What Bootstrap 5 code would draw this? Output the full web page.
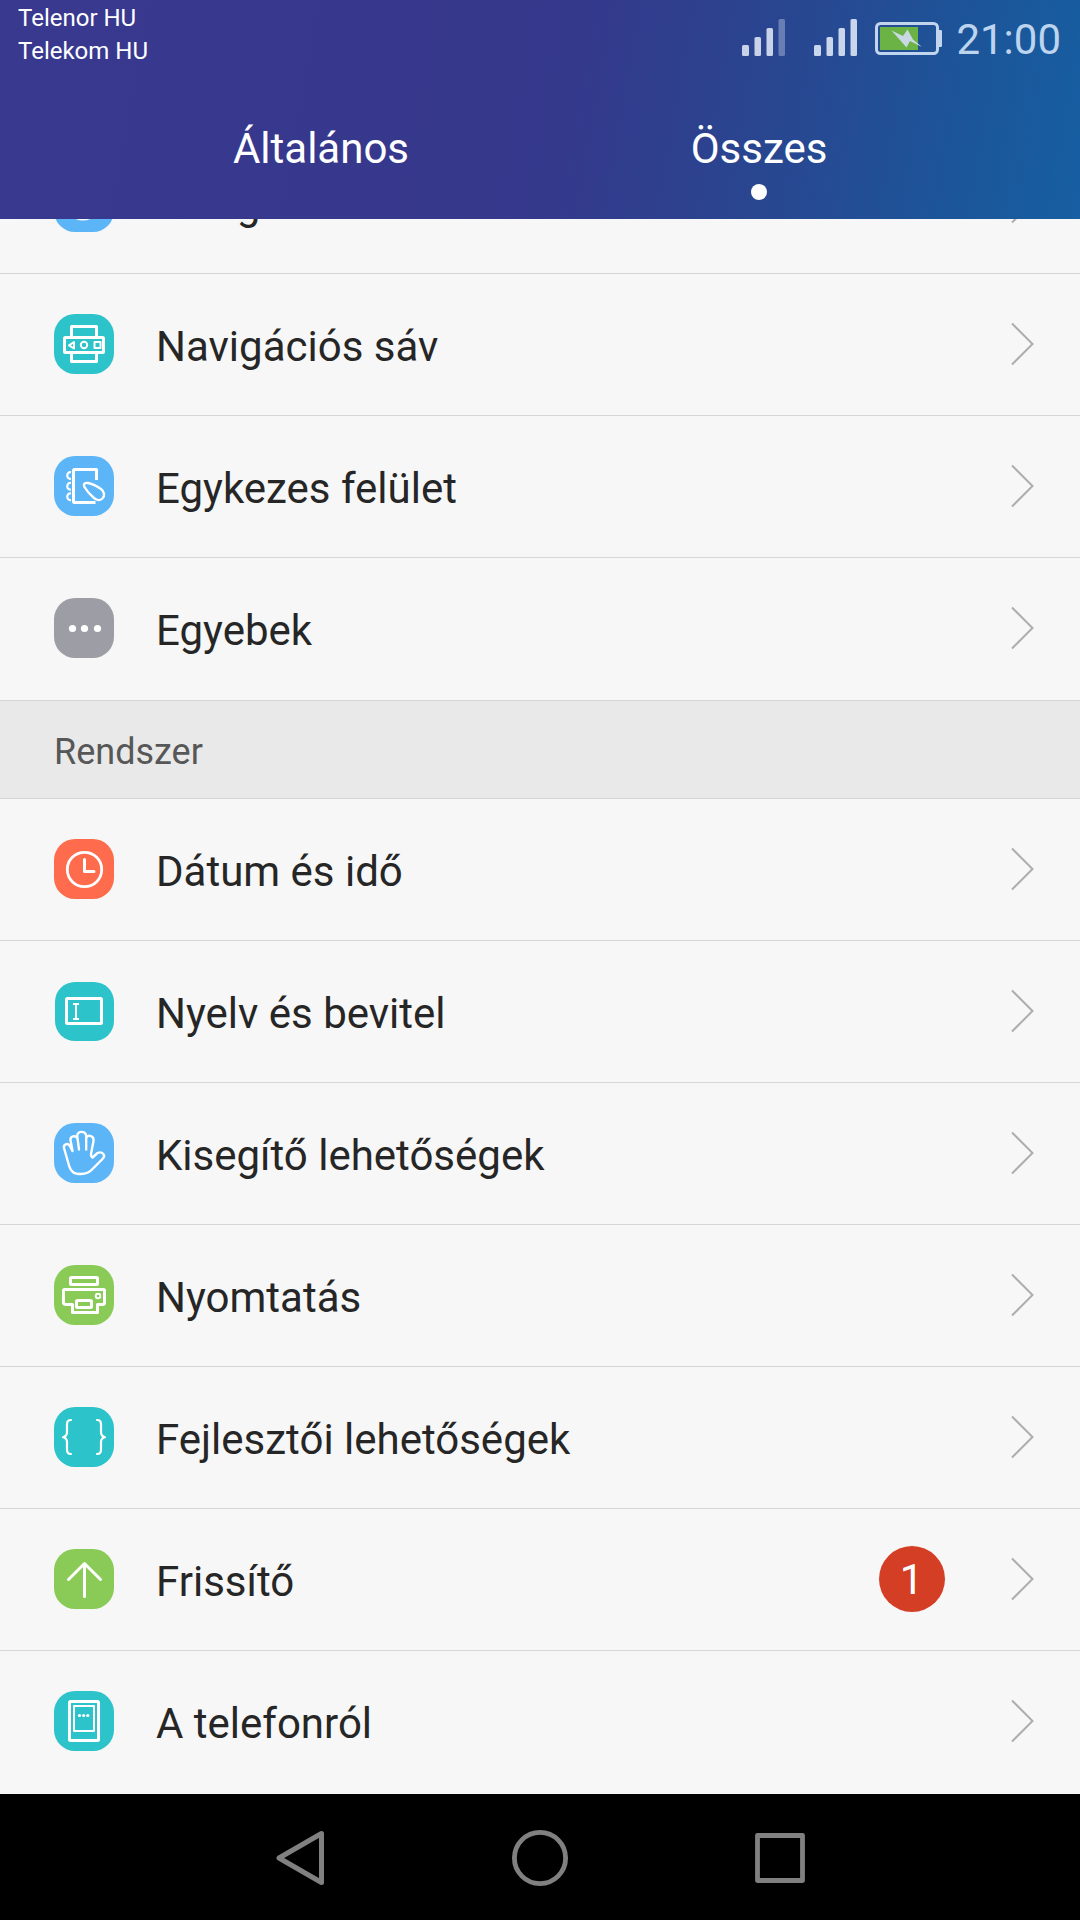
<!DOCTYPE html>
<html lang="hu">
<head>
<meta charset="utf-8">
<title>Beállítások</title>
<meta name="viewport" content="width=device-width, initial-scale=1">
<link href="https://cdn.jsdelivr.net/npm/bootstrap@5.3.0/dist/css/bootstrap.min.css" rel="stylesheet">
<style>
body{font-family:Roboto,"Noto Sans",sans-serif;background:#f7f7f7;color:#262626;height:1920px;overflow:hidden}
svg{display:block;flex:none}
.top-bar{height:219px;flex:none;color:#fff;z-index:2;background:linear-gradient(100deg,#38398f 0%,#36388c 47%,#34398c 53%,#284791 72%,#1c5599 88%,#165fa2 100%)}
.status{height:78px;padding:0 19px 0 18px}
.carriers{font-size:24px;line-height:33px;padding-top:2px}
.signal-a{margin-right:29px}.signal-b{margin-right:18px}
.icons-row{padding-top:19px;height:78px}
.clock{font-size:42px;line-height:42px;color:#bcd4ee;margin-left:13px}
.tabs-row{padding:0 102px}
.tab-btn{font-size:42px;line-height:50px;padding-top:46px;color:#fff;width:438px}
.tab-dot{width:16px;height:16px;margin-top:10px}
.settings{height:1575px;flex:none}
.settings .set-row{height:142px;border:0;border-bottom:1px solid #d6d6d6;border-radius:0;background:#f7f7f7;padding:0 45px 1px 54px;color:#262626;flex:none}
.settings .set-last{height:143px;padding-bottom:2px}
.settings .set-last:last-child{padding-bottom:3px}
.row-cut{margin-top:-87px}
.label-text{font-size:42px;line-height:50px;padding:5px 0 0;margin-left:42px}
.row-cut .label-text{padding-top:6px;transform:translateY(.1px)}
.count{width:66px;height:66px;font-size:42px;line-height:67px;font-weight:400;background:#d43e25;padding:0 1px 0 0;margin-right:66px}
.group-head{height:98px;background:#e9e9e9;border-bottom:1px solid #d6d6d6;font-size:36px;color:#575757;padding:4px 54px 0;flex:none}
.nav-keys{height:126px;background:#000;gap:186px;padding:2px 1px 0 0}
.ico{width:60px;height:60px;fill:none;stroke:#fff;stroke-width:3;stroke-linecap:round;stroke-linejoin:round}
.tile{stroke:none}.teal{fill:#2dc3ca}.blue{fill:#5bb5f6}.gray{fill:#9d9ea5}.coral{fill:#ff6b4d}.green{fill:#8acb57}
.solid{fill:#fff;stroke:none}
.chev{fill:none;stroke:#adadad;stroke-width:2}
</style>
<script src="https://cdn.jsdelivr.net/npm/bootstrap@5.3.0/dist/js/bootstrap.bundle.min.js"></script>
</head>
<body class="d-flex flex-column">
<svg width="0" height="0" class="position-absolute"><defs><symbol id="chev" viewBox="0 0 24 44"><path d="M1 1.500 21.500 22 1 42.500"/></symbol></defs></svg>

<header class="top-bar position-relative">
  <div class="status d-flex justify-content-between">
    <div class="carriers"><div>Telenor HU</div><div>Telekom HU</div></div>
    <div class="icons-row d-flex align-items-start">
      <svg class="signal-a" width="43" height="37" fill="#c9d2e9"><rect y="26" width="7" height="11" rx="1.5"/><rect x="12.500" y="18" width="6.500" height="19" rx="1.500"/><rect x="24.500" y="9" width="6.500" height="28" rx="1.500"/><rect x="36.500" width="6.500" height="37" rx="1.500" opacity=".4"/></svg>
      <svg class="signal-b" width="43" height="37" fill="#c9d6ec"><rect y="26" width="7" height="11" rx="1.5"/><rect x="12.500" y="18" width="6.500" height="19" rx="1.500"/><rect x="24.500" y="9" width="6.500" height="28" rx="1.500"/><rect x="36.500" width="6.500" height="37" rx="1.500"/></svg>
      <svg width="68" height="37"><rect x="1.500" y="4.500" width="61" height="30" rx="4" fill="none" stroke="#c1d5ee" stroke-width="3"/><path d="M64 11h2q1 0 1 1v15q0 1-1 1h-2z" fill="#c1d5ee"/><rect x="5" y="8" width="38" height="23" fill="#6ab344"/><path d="M16.500 11.500 28 17l4.500-6.500 5.500 10 9 7.500-12-6-3.500 6.500z" fill="#cad8e4"/></svg>
      <div class="clock">21:00</div>
    </div>
  </div>
  <nav class="tabs-row d-flex">
    <div class="tab-btn text-center">Általános</div>
    <div class="tab-btn d-flex flex-column align-items-center">Összes<span class="tab-dot rounded-circle bg-white"></span></div>
  </nav>
</header>

<main class="settings list-group list-group-flush overflow-hidden">
  <a class="set-row row-cut list-group-item d-flex align-items-center">
    <svg class="ico"><rect class="tile blue" width="60" height="60" rx="21"/><circle cx="29" cy="31" r="16"/></svg>
    <span class="label-text me-auto">Mozgásvezérlés</span><svg class="chev" width="24" height="44"><use href="#chev"/></svg>
  </a>
  <a class="set-row list-group-item d-flex align-items-center">
    <svg class="ico"><rect class="tile teal" width="60" height="60" rx="21"/><path d="M17.500 22V12.500h25V22M17.500 40v7.500h25V40"/><rect x="10.500" y="23.500" width="39" height="15" rx="1"/><g stroke-width="2"><path d="M20 28v6.500l-5-3.200z"/><circle cx="30" cy="31" r="3.200"/><rect x="40.500" y="28" width="6" height="6"/></g></svg>
    <span class="label-text me-auto">Navigációs sáv</span><svg class="chev" width="24" height="44"><use href="#chev"/></svg>
  </a>
  <a class="set-row list-group-item d-flex align-items-center">
    <svg class="ico"><rect class="tile blue" width="60" height="60" rx="21"/><path stroke-linecap="butt" d="M42.500 24V13.500H20.500q-1 0-1 1V45.500q0 1 1 1H41.500"/><path stroke-width="2.200" stroke-linecap="butt" d="M17 16.200c-5-1-5 7.500 0 6.500M17 27c-5-1-5 7.500 0 6.500M17 37.500c-5-1-5 7.500 0 6.500"/><path stroke-width="2.400" d="M30.500 31C29 28 31 26.500 34 27c4 .6 10 4 13 6 3.500 2.500 4 7 1.500 9.500-2 2-5.500 2-8.500-.5-3.500-3-7.500-7.500-9.500-11z"/></svg>
    <span class="label-text me-auto">Egykezes felület</span><svg class="chev" width="24" height="44"><use href="#chev"/></svg>
  </a>
  <a class="set-row set-last list-group-item d-flex align-items-center">
    <svg class="ico"><rect class="tile gray" width="60" height="60" rx="21"/><g class="solid"><circle cx="18.500" cy="30.500" r="3.600"/><circle cx="30.500" cy="30.500" r="3.600"/><circle cx="43.500" cy="30.500" r="3.600"/></g></svg>
    <span class="label-text me-auto">Egyebek</span><svg class="chev" width="24" height="44"><use href="#chev"/></svg>
  </a>
  <div class="group-head d-flex align-items-center">Rendszer</div>
  <a class="set-row list-group-item d-flex align-items-center">
    <svg class="ico"><rect class="tile coral" width="60" height="60" rx="21"/><circle cx="30.500" cy="30.500" r="17.200" stroke-width="2.800"/><path d="M30.500 20.500v12h9.500"/></svg>
    <span class="label-text me-auto">Dátum és idő</span><svg class="chev" width="24" height="44"><use href="#chev"/></svg>
  </a>
  <a class="set-row list-group-item d-flex align-items-center">
    <svg class="ico"><rect class="tile teal" x="1" y="1" width="59" height="59" rx="20"/><rect x="12.500" y="17.500" width="35" height="25" rx="1"/><path stroke-width="2" stroke-linecap="butt" d="M19 23h6M22 23v15M19 38h6"/></svg>
    <span class="label-text me-auto">Nyelv és bevitel</span><svg class="chev" width="24" height="44"><use href="#chev"/></svg>
  </a>
  <a class="set-row list-group-item d-flex align-items-center">
    <svg class="ico"><rect class="tile blue" width="60" height="60" rx="21"/><path stroke-width="2.400" d="M18.500 28 15.500 22.500c-2-3-6.500-1-5.500 2.500L15 42.500C17 49 20 51 27 51c6 0 8.500-1.500 11.500-5L48.500 36c4-4-.5-8-5-6l-5 4.500c-1.500-.5-1.500-1.500-1.500-3.500L39.500 18c.8-5.500-5-6.500-7.300-3.500M18.500 28 16.500 17c-.5-4 5-5 6.700-2M25 26.500 23.200 13c0-5.500 8.500-5.500 9 0v13.500"/></svg>
    <span class="label-text me-auto">Kisegítő lehetőségek</span><svg class="chev" width="24" height="44"><use href="#chev"/></svg>
  </a>
  <a class="set-row list-group-item d-flex align-items-center">
    <svg class="ico"><rect class="tile green" width="60" height="60" rx="21"/><rect x="16.500" y="12.500" width="27" height="7" rx="1"/><path d="M10.500 24.500h39q1 0 1 1V37.500q0 2-2 2h-5V47.500h-25V39.500h-6q-3 0-3-2V25.500q0-1 1-1z"/><rect x="22.500" y="35.500" width="15" height="7" rx="1"/><circle cx="44" cy="31" r="2.300" stroke-width="1.900"/></svg>
    <span class="label-text me-auto">Nyomtatás</span><svg class="chev" width="24" height="44"><use href="#chev"/></svg>
  </a>
  <a class="set-row list-group-item d-flex align-items-center">
    <svg class="ico"><rect class="tile teal" width="60" height="60" rx="21"/><path stroke-width="2.200" d="M17 13c-3 0-4 1-4 4v8c0 3-1 4.500-4 5.200 3 .8 4 2 4 4.800v8c0 3 1 4 4 4M43 13c3 0 4 1 4 4v8c0 3 1 4.500 4 5.200-3 .8-4 2-4 4.800v8c0 3-1 4-4 4"/></svg>
    <span class="label-text me-auto">Fejlesztői lehetőségek</span><svg class="chev" width="24" height="44"><use href="#chev"/></svg>
  </a>
  <a class="set-row list-group-item d-flex align-items-center">
    <svg class="ico"><rect class="tile green" width="60" height="60" rx="21"/><path d="M30.500 14.500v33M14.500 30.500l16-16 16 16"/></svg>
    <span class="label-text me-auto">Frissítő</span><span class="count badge rounded-circle text-center">1</span><svg class="chev" width="24" height="44"><use href="#chev"/></svg>
  </a>
  <a class="set-row set-last list-group-item d-flex align-items-center">
    <svg class="ico"><rect class="tile teal" width="60" height="60" rx="21"/><rect x="15.500" y="10.500" width="29" height="39" rx="1"/><rect x="20" y="15" width="20" height="25" stroke-width="2"/><g class="solid"><circle cx="25.500" cy="24.500" r="1.600"/><circle cx="29.700" cy="24.500" r="1.600"/><circle cx="33.800" cy="24.500" r="1.600"/></g></svg>
    <span class="label-text me-auto">A telefonról</span><svg class="chev" width="24" height="44"><use href="#chev"/></svg>
  </a>
</main>

<footer class="nav-keys d-flex justify-content-center align-items-center">
  <svg width="50" height="56" fill="none" stroke="#808080" stroke-width="5" stroke-linejoin="round"><path d="M46.500 3.500v49L4 28z"/></svg>
  <svg width="58" height="58" fill="none" stroke="#808080" stroke-width="4.800"><circle cx="29" cy="29" r="25.600"/></svg>
  <svg width="50" height="50" fill="none" stroke="#808080" stroke-width="4.800" stroke-linejoin="round"><rect x="2.500" y="2.500" width="45" height="45"/></svg>
</footer>
</body>
</html>
